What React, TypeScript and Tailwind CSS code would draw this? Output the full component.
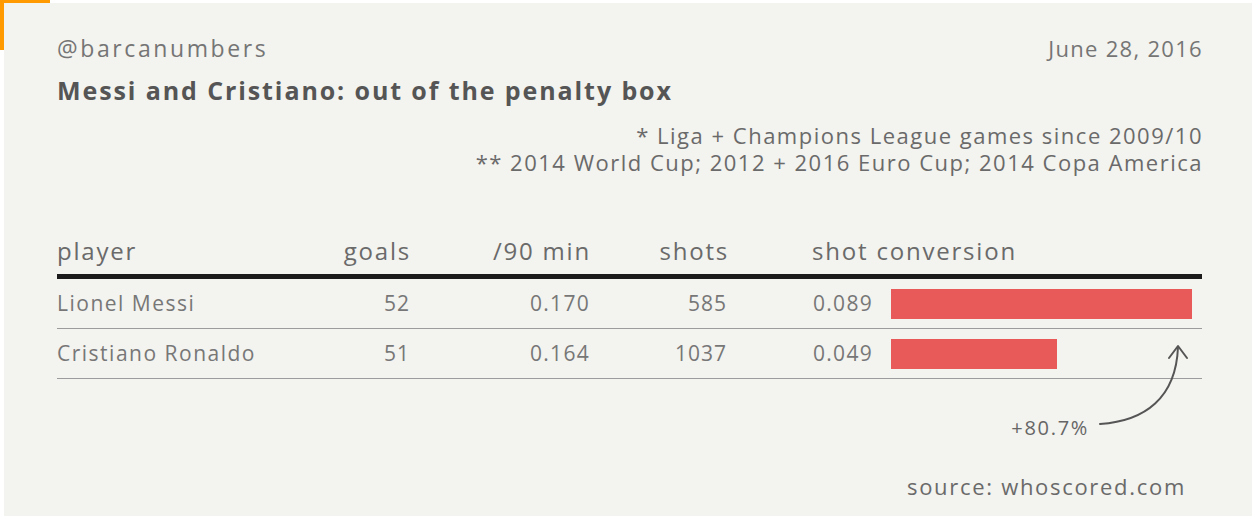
import React from "react";

const font = { fontFamily: '"Open Sans", "DejaVu Sans", sans-serif' };

const rows = [
  { name: "Lionel Messi", goals: "52", per90: "0.170", shots: "585", conv: "0.089", bar: 301 },
  { name: "Cristiano Ronaldo", goals: "51", per90: "0.164", shots: "1037", conv: "0.049", bar: 166 },
];

export default function App() {
  return (
    <div className="relative w-[1258px] h-[519px] bg-white overflow-hidden" style={font}>
      <div className="absolute left-0 top-0 w-[50px] h-[50px] bg-[#ff9a00]" />
      <div className="relative ml-[4px] mt-[3px] w-[1248px] h-[513px] bg-[#f3f3ef] pl-[53px] pr-[50px] pt-[31px] flex flex-col">
        <div className="flex justify-between items-center h-[28px] leading-[28px] text-[#757575]">
          <span className="text-[23px] tracking-[2.6px]">@barcanumbers</span>
          <span className="text-[22px] tracking-[1.3px] -mr-[1px]">June 28, 2016</span>
        </div>
        <div className="mt-[12px] h-[32px] text-[25px] leading-[32px] font-bold text-[#555555] tracking-[1.9px]">
          Messi and Cristiano: out of the penalty box
        </div>
        <div className="mt-[16px] flex flex-col items-end text-[22px] leading-[27px] text-[#6a6a6a] tracking-[1.5px] -mr-[1px]">
          <span>* Liga + Champions League games since 2009/10</span>
          <span>** 2014 World Cup; 2012 + 2016 Euro Cup; 2014 Copa America</span>
        </div>
        <div className="mt-[60px] flex items-center h-[30px] text-[24px] leading-[30px] text-[#6a6a6a] tracking-[1.8px]">
          <span className="w-[253px]">player</span>
          <span className="w-[101px] text-right">goals</span>
          <span className="w-[180px] text-right">/90 min</span>
          <span className="w-[138px] text-right">shots</span>
          <span className="pl-[83px]">shot conversion</span>
        </div>
        <div className="mt-[8px] h-[5px] bg-[#1b1b1b]" />
        {rows.map((r) => (
          <div
            key={r.name}
            className="flex items-center h-[50px] border-b border-[#9c9c9c] text-[21px] text-[#777777]"
          >
            <span className="w-[253px] tracking-[1.5px]">{r.name}</span>
            <span className="w-[100px] text-right tracking-[1px]">{r.goals}</span>
            <span className="w-[180px] text-right tracking-[1.3px] -mr-[1px]">{r.per90}</span>
            <span className="w-[138px] text-right tracking-[1px]">{r.shots}</span>
            <span className="ml-[86px] w-[78px] tracking-[1.3px]">{r.conv}</span>
            <div className="h-[30px] bg-[#e85a5a]" style={{ width: r.bar }} />
          </div>
        ))}
        <div className="mt-[36px] self-end mr-[113px] h-[26px] text-[20px] leading-[26px] text-[#666666] tracking-[1.7px]">
          +80.7%
        </div>
        <div className="mt-[31px] self-end mr-[16px] h-[28px] text-[22px] leading-[28px] text-[#6a6a6a] tracking-[1.7px]">
          source: whoscored.com
        </div>
        <svg
          className="absolute left-0 top-0 pointer-events-none"
          width="1248"
          height="513"
          viewBox="4 3 1248 513"
        >
          <path
            d="M1100 424 C1145 421 1176 398 1178 347"
            fill="none"
            stroke="#555"
            strokeWidth="2"
            strokeLinecap="round"
          />
          <path
            d="M1169 358 L1178 346 L1187 358"
            fill="none"
            stroke="#555"
            strokeWidth="2"
            strokeLinecap="round"
            strokeLinejoin="round"
          />
        </svg>
      </div>
    </div>
  );
}
